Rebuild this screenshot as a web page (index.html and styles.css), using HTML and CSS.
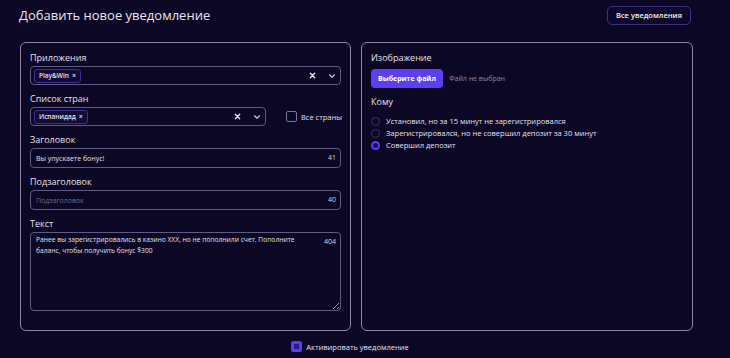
FILE: index.html
```html
<!DOCTYPE html>
<html lang="ru">
<head>
  <meta charset="UTF-8" />
  <meta name="viewport" content="width=device-width, initial-scale=1" />
  <title>Добавить новое уведомление</title>
  <link rel="stylesheet" href="styles.css">
</head>
<body>
  <div class="page">
    <div class="header">
      <h1>Добавить новое уведомление</h1>
      <button class="btn-outline">Все уведомления</button>
    </div>

    <div class="cards">
      <div class="card">
        <div class="field">
          <div class="label">Приложения</div>
          <div class="select">
            <span class="chip">Play&amp;Win <span class="chip-x">×</span></span>
            <span class="select-icons">
              <svg width="7" height="7" viewBox="0 0 8 8"><path d="M1.5 1.5l5 5M6.5 1.5l-5 5" stroke="#e6e4f0" stroke-width="1.6" stroke-linecap="round"/></svg>
              <svg width="8" height="6" viewBox="0 0 8 6"><path d="M1.5 1.8l2.5 2.4 2.5-2.4" fill="none" stroke="#c9c6dc" stroke-width="1.2" stroke-linecap="round" stroke-linejoin="round"/></svg>
            </span>
          </div>
        </div>

        <div class="field">
          <div class="label">Список стран</div>
          <div class="row">
            <div class="select select-short">
              <span class="chip">Испанидад <span class="chip-x">×</span></span>
              <span class="select-icons">
                <svg width="7" height="7" viewBox="0 0 8 8"><path d="M1.5 1.5l5 5M6.5 1.5l-5 5" stroke="#e6e4f0" stroke-width="1.6" stroke-linecap="round"/></svg>
                <svg width="8" height="6" viewBox="0 0 8 6"><path d="M1.5 1.8l2.5 2.4 2.5-2.4" fill="none" stroke="#c9c6dc" stroke-width="1.2" stroke-linecap="round" stroke-linejoin="round"/></svg>
              </span>
            </div>
            <label class="check">
              <span class="box"></span>
              Все страны
            </label>
          </div>
        </div>

        <div class="field">
          <div class="label">Заголовок</div>
          <div class="input-wrap">
            <input class="input" type="text" value="Вы упускаете бонус!" />
            <span class="counter">41</span>
          </div>
        </div>

        <div class="field">
          <div class="label">Подзаголовок</div>
          <div class="input-wrap">
            <input class="input" type="text" placeholder="Подзаголовок" />
            <span class="counter">40</span>
          </div>
        </div>

        <div class="field">
          <div class="label">Текст</div>
          <div class="input-wrap">
            <textarea class="textarea" spellcheck="false">Ранее вы зарегистрировались в казино XXX, но не пополнили счет. Пополните баланс, чтобы получить бонус $300</textarea>
            <span class="counter">404</span>
          </div>
        </div>
      </div>

      <div class="card">
        <div class="field">
          <div class="label">Изображение</div>
          <div class="file-row">
            <button class="btn-file">Выберите файл</button>
            <span class="file-name">Файл не выбран</span>
          </div>
        </div>

        <div class="field">
          <div class="label">Кому</div>
          <div class="radios">
            <label class="radio"><span class="dot"></span>Установил, но за 15 минут не зарегистрировался</label>
            <label class="radio"><span class="dot"></span>Зарегистрировался, но не совершил депозит за 30 минут</label>
            <label class="radio"><span class="dot dot-on"></span>Совершил депозит</label>
          </div>
        </div>
      </div>
    </div>

    <div class="activate">
      <label class="check">
        <span class="box box-on"></span>
        Активировать уведомление
      </label>
    </div>
  </div>
</body>
</html>
```

FILE: styles.css
```css
body {
  margin: 0;
  background: #0c0724;
  color: #e6e4ef;
  font-family: "Open Sans", "Noto Sans", sans-serif;
}

.page {
  width: 674px;
  padding: 5px 0 0 19px;
}

.header {
  display: flex;
  justify-content: space-between;
  align-items: center;
  height: 20px;
  padding-right: 2px;
}

h1 {
  margin: 0;
  font-size: 13px;
  font-weight: 500;
  color: #e8e6f0;
  line-height: 20px;
}

.btn-outline {
  height: 19px;
  padding: 0 8px;
  font-family: inherit;
  font-size: 7.5px;
  font-weight: 600;
  color: #f0eef8;
  background: #0e0828;
  border: 1px solid #3a3080;
  border-radius: 5px;
}

.cards {
  display: grid;
  grid-template-columns: 331px 332px;
  gap: 10px;
  margin-top: 17px;
  margin-left: 1px;
}

.card {
  border: 1px solid #8a87a6;
  border-radius: 6px;
  padding: 9px 9px 19px;
}

.field {
  margin-bottom: 8px;
}

.field:last-child {
  margin-bottom: 0;
}

.label {
  font-size: 9px;
  line-height: 12px;
  margin-bottom: 2px;
  color: #e2e0ec;
}

.row {
  display: flex;
  align-items: center;
  gap: 20px;
}

.select {
  display: flex;
  align-items: center;
  height: 19px;
  box-sizing: border-box;
  border: 1px solid #5f5b82;
  border-radius: 4px;
  padding: 0 3px;
}

.select-short {
  width: 236px;
  flex-shrink: 0;
}

.chip {
  display: inline-flex;
  align-items: center;
  gap: 3px;
  height: 14px;
  padding: 0 4px;
  box-sizing: border-box;
  border: 1px solid #3a3093;
  border-radius: 3px;
  background: #120b36;
  font-size: 6.5px;
  font-weight: 600;
  color: #e4e2f0;
}

.chip-x {
  font-size: 7px;
}

.select-icons {
  margin-left: auto;
  display: flex;
  align-items: center;
  gap: 12px;
  padding-right: 1px;
}

.check {
  display: flex;
  align-items: center;
  gap: 4px;
  font-size: 7.5px;
  color: #e4e2ee;
  white-space: nowrap;
}

.box {
  width: 9px;
  height: 9px;
  border: 1px solid #7a779a;
  border-radius: 2px;
}

.box-on {
  border-color: #5a3ff0;
  background: #5a3ff0;
  box-shadow: inset 0 0 0 2px #5a3ff0, inset 0 0 0 5px #2a1d8a;
}

.input-wrap {
  position: relative;
}

.input {
  display: block;
  width: 100%;
  height: 20px;
  box-sizing: border-box;
  border: 1px solid #5f5b82;
  border-radius: 4px;
  background: transparent;
  padding: 0 5px;
  font-family: inherit;
  font-size: 7px;
  color: #e2e0ec;
}

.input::placeholder {
  color: #6e6b8c;
}

.textarea {
  display: block;
  width: 100%;
  height: 79px;
  box-sizing: border-box;
  border: 1px solid #5f5b82;
  border-radius: 4px;
  background: transparent;
  padding: 1px 40px 1px 5px;
  font-family: inherit;
  font-size: 6.7px;
  line-height: 11px;
  color: #e2e0ec;
}

.counter {
  position: absolute;
  right: 5px;
  top: 5px;
  font-size: 7px;
  color: #d8d6e6;
}

.file-row {
  display: flex;
  align-items: center;
  gap: 6px;
  margin-top: 5px;
}

.btn-file {
  height: 19px;
  padding: 0 7px;
  border: none;
  border-radius: 4px;
  background: #5b3ff0;
  color: #fff;
  font-family: inherit;
  font-size: 7px;
  font-weight: 700;
}

.file-name {
  font-size: 7px;
  color: #8a88a4;
}

.radios {
  display: flex;
  flex-direction: column;
  padding-top: 5px;
}

.radio {
  display: flex;
  align-items: center;
  gap: 6px;
  height: 12px;
  font-size: 7.5px;
  color: #e4e2ee;
}

.dot {
  width: 9px;
  height: 9px;
  box-sizing: border-box;
  border: 1px solid #3b356a;
  border-radius: 50%;
}

.dot-on {
  border: 2.5px solid #5b3ff0;
  background: #1a1150;
}

.activate {
  display: flex;
  justify-content: center;
  margin-top: 10px;
  padding-right: 12px;
}
```
